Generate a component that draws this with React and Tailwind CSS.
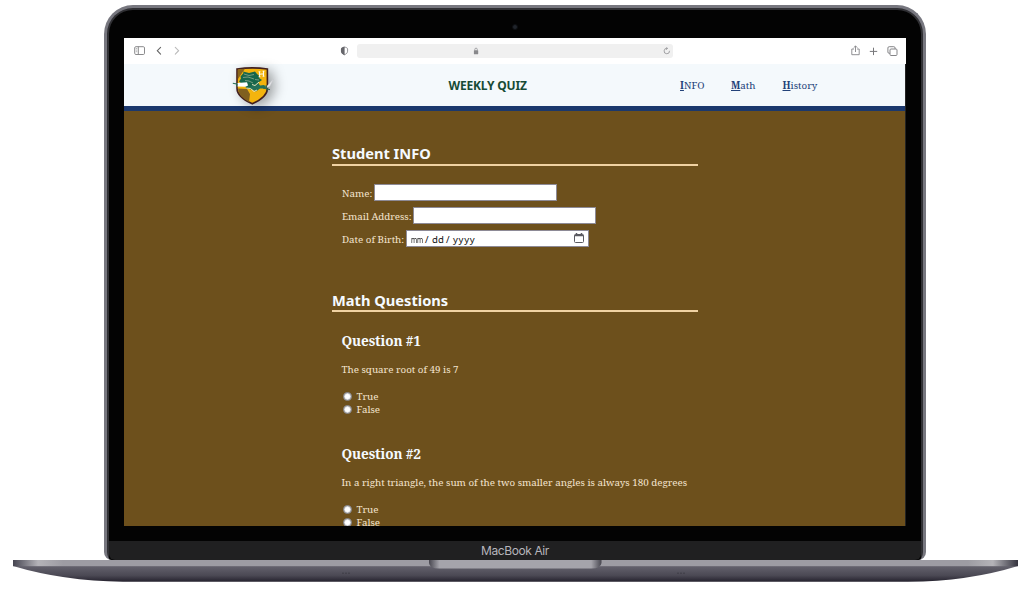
import React from "react";

const serif = "font-['Noto_Serif','Droid_Serif','DejaVu_Serif_Condensed','DejaVu_Serif',serif]";
const sans = "font-['Noto_Sans',sans-serif]";

function BrowserBar() {
  return (
    <div className="flex h-[26px] shrink-0 items-center bg-white">
      <svg className="ml-[10px] h-[12px] w-[11px]" viewBox="0 0 11 12" fill="none" stroke="#8b8b8d">
        <rect x="0.7" y="1.7" width="9.8" height="7.8" rx="1.2" />
        <path d="M4.3 1.500v8" />
        <path d="M1.800 3.500h1.400M1.800 5.100h1.400M1.800 6.700h1.400" strokeWidth="0.6" />
      </svg>
      <svg className="ml-[11px] h-[10px] w-[6px]" viewBox="0 0 6 10" fill="none" stroke="#666" strokeWidth="1.1" strokeLinecap="round">
        <path d="M4.6 1.300 1.300 4.700l3.300 3.400" />
      </svg>
      <svg className="ml-[12px] h-[10px] w-[6px]" viewBox="0 0 6 10" fill="none" stroke="#bbb" strokeWidth="1.1" strokeLinecap="round">
        <path d="M1.3 1.300 4.600 4.700 1.300 8.100" />
      </svg>
      <svg className="ml-[160px] h-[10px] w-[9px]" viewBox="0 0 9 10">
        <path d="M4.500 1.100C6 1.300 7.600 1.800 7.600 3v2.200C7.600 6.800 6.400 8 4.500 8.700 2.600 8 1.400 6.800 1.400 5.200V3C1.400 1.800 3 1.300 4.500 1.100z" fill="white" stroke="#88888c" strokeWidth=".9" />
        <path d="M4.600.7C2.800.9 1 1.500 1 3v2.200C1 7.200 2.600 8.500 4.600 9.200z" fill="#66666b" />
      </svg>
      <div className="ml-[8px] flex h-[14px] w-[316px] items-center rounded-[3px] bg-[#f0f0f0]">
        <svg className="ml-[116px] h-[8px] w-[6px]" viewBox="0 0 6 8">
          <rect x=".9" y="3.300" width="4.300" height="4" rx=".5" fill="#88888b" />
          <path d="M1.800 3.500V2.400a1.250 1.250 0 0 1 2.500 0v1.100" fill="none" stroke="#88888b" strokeWidth=".7" />
        </svg>
        <svg className="ml-auto mr-[2px] h-[8px] w-[8px]" viewBox="0 0 8 8" fill="none" stroke="#919193" strokeWidth=".8">
          <path d="M4.300 1.400A2.700 2.700 0 1 0 6.500 3.800M3.200 0l1.400 1.400L3.200 2.800" />
        </svg>
      </div>
      <svg className="ml-auto h-[12px] w-[9px]" viewBox="0 0 9 12" fill="none" stroke="#858588" strokeWidth=".9">
        <path d="M3 4H.8v5.700h7.400V4H6M4.500 7V1M2.700 2.700l1.800-1.800 1.800 1.800" />
      </svg>
      <svg className="ml-[9px] h-[9px] w-[9px]" viewBox="0 0 9 9" stroke="#77777a" strokeWidth="1">
        <path d="M4.500 .7v7.400M.8 4.400h7.400" />
      </svg>
      <svg className="ml-[9px] mr-[8.500px] h-[11px] w-[11px]" viewBox="0 0 11 11" fill="none" stroke="#858588" strokeWidth="1">
        <rect x="3" y="3" width="7" height="6.500" rx="1" />
        <path d="M3 7.300h-.8A1.300 1.300 0 0 1 .9 6V2A1.300 1.300 0 0 1 2.200.7h4.600A1.300 1.300 0 0 1 8.100 2v1" />
      </svg>
    </div>
  );
}

function Crest() {
  return (
    <svg className="h-[40px] w-[43px] overflow-visible drop-shadow-[5px_3px_6px_rgba(0,0,0,0.35)]" viewBox="0 0 43 40">
      <path d="M5 3Q20.500.8 35.400 3V22.500Q35.400 31 20.300 37.800Q5 31 5 22.500Z" fill="#f4b40d" stroke="#42201f" strokeWidth="1.600" />
      <path d="M6 3.700Q10 3 13 2.800L10 7L6 13Z" fill="#8b661c" />
      <path d="M6 22.500l9 .5 3 5-1 8Q6 30 6 22.500Z" fill="#80601f" />
      <path d="M8.500 10.500l3-3.500-.5-1.500 6 1.500 6-1.500 2 2.500 3 2.500 -1 1.500 3 2-3 2-2 3.500-6 4-4-1-4-4-4-3 2-3z" fill="#17664b" />
      <path d="M12 8l5 1.500 5-1M11 11.500l5-.5 6 2M13 14.500l4 .5 4 2M23 13.500l4 .5" fill="none" stroke="#8fa88e" strokeWidth=".8" />
      <path d="M5.500 17l9.500-.8 1 3.300-2.500 1.200-8-.2z" fill="white" />
      <path d="M17 21l5-1.500 4-3 2 3 4-.5 3 2.500-3 1-4 0-4 3-4-2z" fill="#257058" />
      <path d="M14.500 22l4 .5 3.500 3 3-1.500M20 18.500l3 1 4-3.500" fill="none" stroke="#e8e1bc" strokeWidth="1" />
      <path d="M.8 17.300l5 1M4 17.200l1.200 3" fill="none" stroke="#286d55" strokeWidth="1.100" />
      <path d="M35 20l6.500-7-3.500 7-3 2z" fill="#e5e5e8" stroke="#c3c2c8" strokeWidth=".4" />
      <path d="M31 22l7 1.700M34 19l1.500 5.500" stroke="#256750" strokeWidth="1" />
      <path d="M27.500 5.800v5M31.500 5.300v5M27.500 8.300l4-.5M26.600 5.800h1.800M30.600 5.300h1.800M26.600 10.800h1.800M30.600 10.300h1.800" fill="none" stroke="#fffbe9" strokeWidth="1.100" />
    </svg>
  );
}

function NavLink({ first, rest, width }) {
  return (
    <a className={`${width} flex whitespace-nowrap text-[#234279]`}>
      <b className="underline decoration-1 underline-offset-1">{first}</b>
      <span>{rest}</span>
    </a>
  );
}

function Field({ label, width, children }) {
  return (
    <div className="flex h-[17px] items-center">
      <label className={`${width} pt-[4px] tracking-[-0.02px] whitespace-nowrap`}>{label}</label>
      <div className="flex h-[17px] w-[183px] items-center border border-[#8d8a96] bg-white">{children}</div>
    </div>
  );
}

function SectionTitle({ children, lift }) {
  return (
    <h2 className={`${sans} ${lift} flex h-[22px] items-center border-b-2 border-[#f0d2a2] text-[14.650px] leading-none font-bold whitespace-nowrap text-[#f5faff]`}>
      {children}
    </h2>
  );
}

function Choice({ children }) {
  return (
    <label className="flex h-[13.300px] items-center leading-[13px]">
      <span className="ml-[1px] h-[9px] w-[9px] rounded-full border border-[#77777c] bg-white shadow-[inset_0_0_0_1px_#d5d5d5]" />
      <span className="ml-[5px]">{children}</span>
    </label>
  );
}

function Question({ title, text }) {
  return (
    <div className="pl-[9.500px]">
      <h3 className="h-[20px] text-[13.600px] leading-[20px] font-bold tracking-[-0.12px] whitespace-nowrap text-[#f5faff]">{title}</h3>
      <p className="mt-[11px] mb-[12px] h-[16px] leading-[16px] tracking-[-0.012px] whitespace-nowrap">{text}</p>
      <Choice>True</Choice>
      <Choice>False</Choice>
    </div>
  );
}

function Quiz() {
  return (
    <div className={`${serif} flex min-h-0 w-[781px] flex-1 flex-col bg-[#6d501c] text-[9.800px] text-[#f3e3ce]`}>
      <header className="flex h-[47px] shrink-0 items-center border-b-[5px] border-[#1b386d] bg-[#f4f9fc]">
        <div className="ml-[108px] mt-[2px] h-[40px] w-[43px]"><Crest /></div>
        <h1 className={`${sans} ml-[173.500px] w-[231.500px] pt-[2px] text-[12px] leading-none font-bold tracking-[-0.17px] whitespace-nowrap text-[#174b36]`}>WEEKLY QUIZ</h1>
        <nav className="flex pt-[2px]">
          <NavLink first="I" rest="NFO" width="w-[51px]" />
          <NavLink first="M" rest="ath" width="w-[51.500px]" />
          <NavLink first="H" rest="istory" width="w-[36px]" />
        </nav>
      </header>
      <main className="ml-[208px] w-[366px] pt-[33px]">
        <SectionTitle lift="pb-[2px]">Student INFO</SectionTitle>
        <form className="mt-[18px] flex flex-col gap-[6px] pl-[10px]">
          <Field label="Name:" width="w-[32px]" />
          <Field label="Email Address:" width="w-[71px]" />
          <Field label="Date of Birth:" width="w-[64px]">
            <div className={`${sans} ml-[3.500px] flex pt-[3px] text-[9.600px] leading-none text-[#111]`}>
              <span className="w-[14.500px] origin-left scale-x-[0.68] text-[9.600px]">mm</span>
              <span className="w-[7px]">/</span>
              <span className="w-[14px]">dd</span>
              <span className="w-[7px]">/</span>
              <span className="tracking-[0.7px]">yyyy</span>
            </div>
            <svg className="ml-auto mr-[4px] h-[11px] w-[10px]" viewBox="0 0 10 11">
              <rect x=".5" y="1.500" width="9" height="8" rx="1" fill="white" stroke="#5a5a60" />
              <path d="M.5 2.500h9M2.500 0v2M7.500 0v2" stroke="#5a5a60" strokeWidth="1.500" />
            </svg>
          </Field>
        </form>
        <div className="h-[43px]" />
        <SectionTitle lift="pb-0">Math Questions</SectionTitle>
        <div className="mt-[19px] flex flex-col gap-[27.400px]">
          <Question title="Question #1" text="The square root of 49 is 7" />
          <Question title="Question #2" text="In a right triangle, the sum of the two smaller angles is always 180 degrees" />
        </div>
      </main>
    </div>
  );
}

function LaptopBase() {
  return (
    <svg className="block h-[22px] w-[1005px]" viewBox="0 0 1005 22">
      <defs>
        <linearGradient id="rim">
          <stop offset="0" stopColor="#454450" />
          <stop offset=".025" stopColor="#b4b3b8" />
          <stop offset=".05" stopColor="#9d9ca3" />
          <stop offset=".95" stopColor="#9d9ca3" />
          <stop offset=".975" stopColor="#b4b3b8" />
          <stop offset="1" stopColor="#34333e" />
        </linearGradient>
        <linearGradient id="body" x2="0" y2="1">
          <stop offset="0" stopColor="#64626d" />
          <stop offset=".6" stopColor="#4b4954" />
          <stop offset="1" stopColor="#25222e" />
        </linearGradient>
        <linearGradient id="notch">
          <stop offset="0" stopColor="#484750" />
          <stop offset=".06" stopColor="#a5a4ab" />
          <stop offset=".94" stopColor="#a5a4ab" />
          <stop offset="1" stopColor="#484750" />
        </linearGradient>
      </defs>
      <path d="M0 6H1005Q955 21.500 895 21.700H110Q50 21 0 6Z" fill="url(#body)" />
      <rect width="1005" height="6.200" fill="url(#rim)" />
      <path d="M416 0H588.500V3Q588 8.500 578 8.500H426Q416.500 8.500 416 3Z" fill="url(#notch)" />
      <path d="M329 13.200h9M664 13.200h9" stroke="#3f3d47" strokeDasharray="2 1" />
    </svg>
  );
}

export default function App() {
  return (
    <div className="h-[589px] w-[1024px] overflow-hidden bg-white pt-[5px]">
      <div className="ml-[104px] flex h-[555px] w-[822px] flex-col overflow-hidden rounded-t-[29px] rounded-b-[8px] border-x-[3px] border-t-[3px] border-[#77777f] bg-[#303034] px-[2px] pt-[2px]">
        <div className="flex min-h-0 flex-1 flex-col overflow-hidden rounded-t-[24px] bg-[#030303]">
          <div className="flex h-[28px] shrink-0 items-center justify-center pt-[5px]">
            <span className="h-[6px] w-[6px] rounded-full border border-[#0c0e11] bg-[#20242b]" />
          </div>
          <div className="ml-[15px] flex h-[488px] w-[782px] shrink-0 flex-col overflow-hidden bg-[#242424]">
            <BrowserBar />
            <Quiz />
          </div>
          <div className="h-[15px] shrink-0" />
          <div className="flex flex-1 items-center justify-center rounded-b-[6px] bg-[#202021] pt-px font-['Inter',sans-serif] text-[12px] leading-none tracking-[-0.4px] text-[#b6b5bb]">MacBook Air</div>
        </div>
      </div>
      <div className="ml-[13px]"><LaptopBase /></div>
    </div>
  );
}
